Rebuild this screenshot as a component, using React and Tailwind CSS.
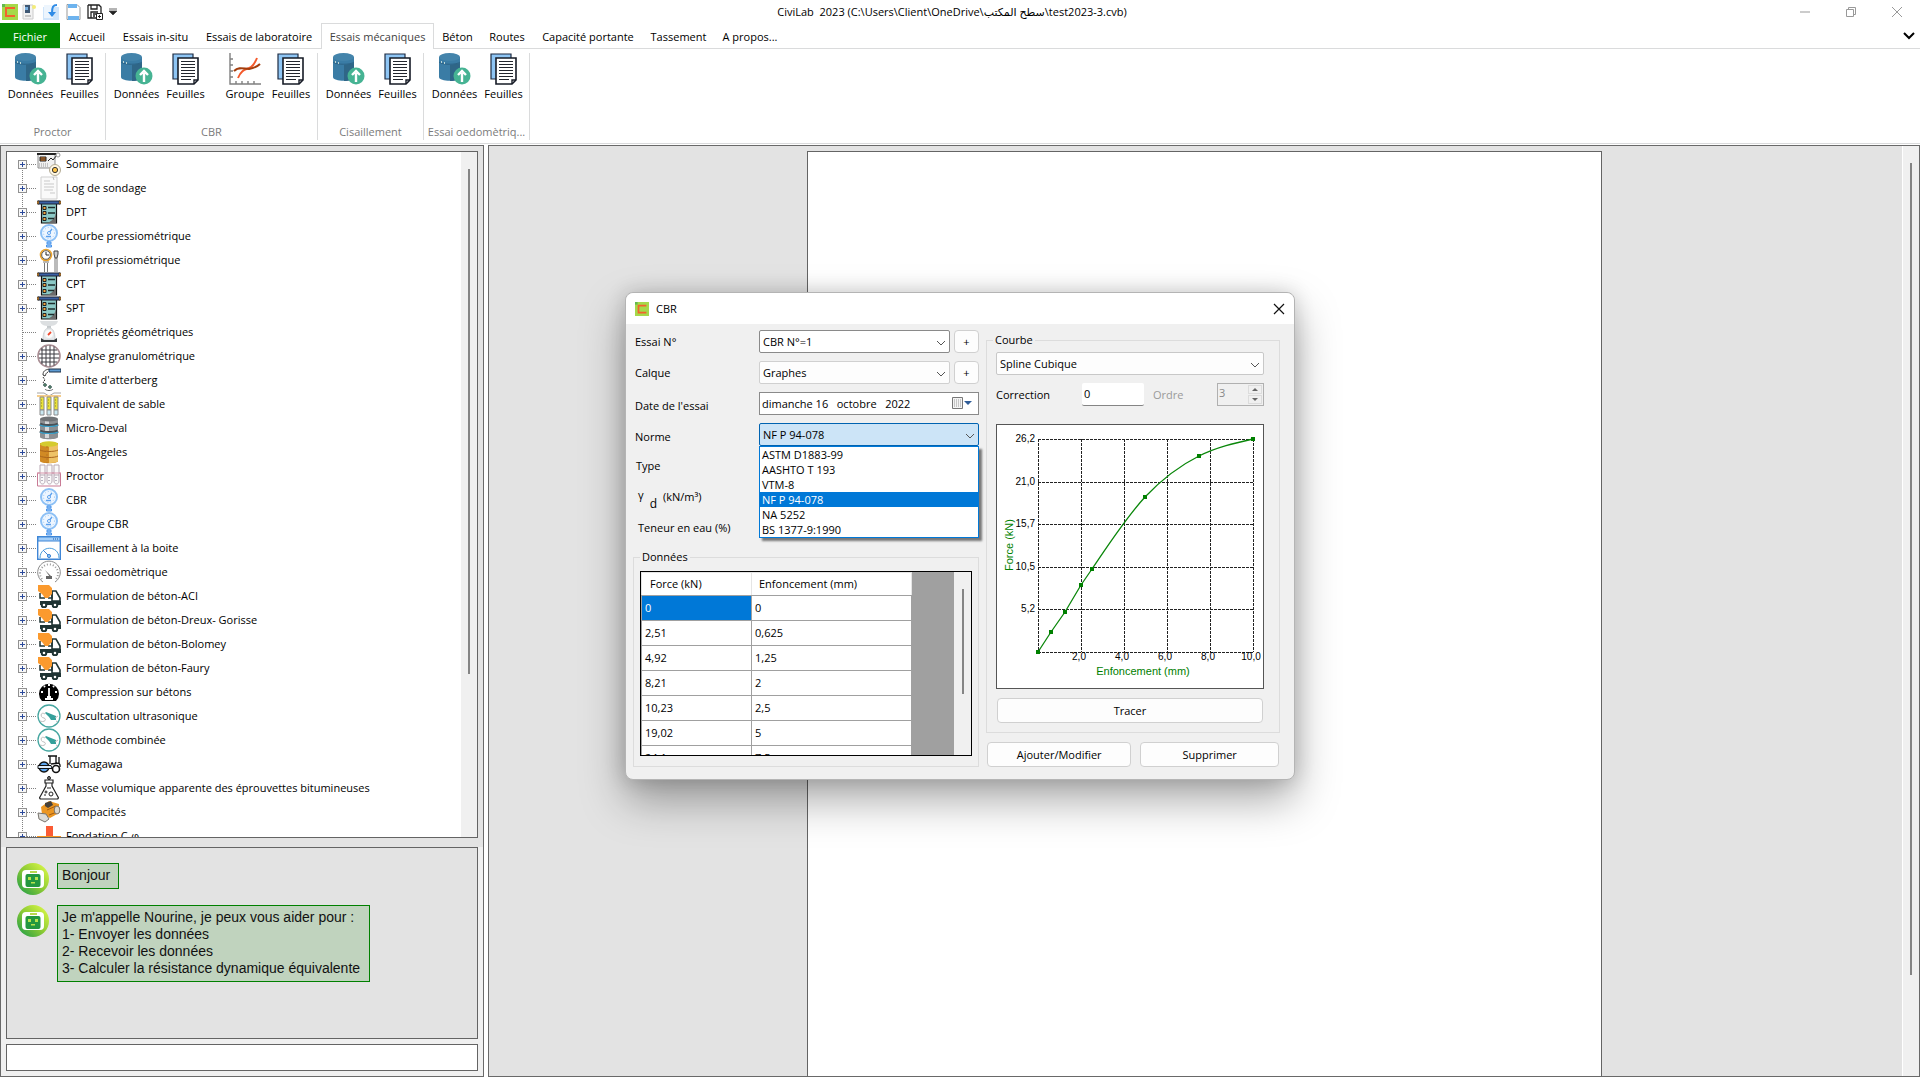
import React from "react";

const svg = (children, size = 24) => (
  <svg viewBox={`0 0 ${size} ${size}`} className="size-full" fill="none" aria-hidden="true">
    {children}
  </svg>
);

const IconSommaire = () => svg(<g transform="translate(0 1)">
  <path d="M1 1h17v14H1z" fill="#f1f1f1" stroke="#8d8d8d" />
  <path d="M0 1h20" stroke="#222" strokeWidth="2" />
  <path d="M3 4h6v4H3z" fill="#e8852b" stroke="#222" />
  <path d="M3 6h6" stroke="#222" />
  <path d="M11 8l3-3 2 2 4-5" stroke="#222" />
  <circle cx="21" cy="2" r="2" fill="#fff" stroke="#999" />
  <path d="M2 11h10M2 13h9" stroke="#999" strokeDasharray="1 1" />
  <circle cx="18" cy="17" r="5.500" fill="#fff8e4" stroke="#b3aa94" />
  <circle cx="18" cy="17" r="2.600" fill="#ffc447" stroke="#333" />
</g>);
const IconLog = () => svg(<>
  <path d="M4 1h16v22H4z" fill="#fafafa" stroke="#cfcfcf" />
  <path d="M7 5h6M7 8h10M7 11h10M7 14h9M13 17h5" stroke="#c9c9c9" />
  <path d="M16 1l1 3" stroke="#bbb" />
</>);
const IconPanel = () => svg(<>
  <path d="M4.500 3h15v20h-15z" fill="#8cc9c6" stroke="#111" strokeWidth="1.200" />
  <path d="M19 11c0 6-3 9-8 12h8z" fill="#6b6b6b" />
  <path d="M1 1h22v3H1z" fill="#3a61a5" stroke="#1c2333" />
  <path d="M0 1h2v3H0zM22 1h2v3h-2z" fill="#d98b2b" stroke="#222" strokeWidth=".6" />
  <path d="M11 7.500h7M11 13h7M11 18.500h6" stroke="#1c2c2c" strokeWidth="1.300" />
  <path d="M6 6.500h3v3H6zM6 11.500h3v3H6zM6 17.500h3v3H6z" fill="#f2a33c" stroke="#222" />
</>);
const IconGauge = () => svg(<>
  <circle cx="12" cy="9" r="8" fill="#eef6ff" stroke="#8dc0f5" strokeWidth="2" />
  <circle cx="12" cy="9" r="5.500" stroke="#9cc9f6" strokeDasharray="1 2" />
  <path d="M11 10l4-5M9 12.500h5" stroke="#5ba0ee" strokeWidth="1.300" />
  <circle cx="12" cy="9" r="1.500" fill="#fff" stroke="#5ba0ee" />
  <path d="M10 18h4v2h-4zM9.500 21h5v2h-5z" fill="#9fccfb" stroke="#4a94ea" />
</>);
const IconProfil = () => svg(<>
  <circle cx="9" cy="7" r="5.500" fill="#fff" stroke="#eaa32e" strokeWidth="1.600" />
  <circle cx="9" cy="7" r="4.300" stroke="#333" strokeWidth=".8" />
  <path d="M9 4v3h3" stroke="#222" />
  <path d="M6 14h6M7.500 15v9M10.500 15v9M18 10v14M20 10v14" stroke="#777" />
  <path d="M17 3h4v3l-1 4h-2l-1-4z" fill="#ccc" stroke="#444" />
</>);
const IconScale = () => svg(<>
  <path d="M3 1h18c-1 4-4 5-9 5S4 5 3 1z" fill="#dcdfe1" />
  <path d="M10 6h4v3h-4z" fill="#c3c8cb" />
  <path d="M6 20c0-8 2-12 6-12s6 4 6 12z" fill="#e5e8ea" stroke="#cfd3d6" />
  <circle cx="12" cy="14" r="4" fill="#fafafa" />
  <path d="M11 15l3-3" stroke="#ef4a2f" strokeWidth="1.800" />
  <path d="M4 18l3 2h10l3-2v4H4z" fill="#34383b" />
</>);
const IconSieve = () => svg(<>
  <circle cx="12" cy="12" r="11" fill="#fff" stroke="#a88d93" strokeWidth="1.600" />
  <path d="M5 4v16M9 2v20M13 1.500v21M17 2.500v19M4 6h16M2 10h20M2 14h20M4 18h16" stroke="#3d3d42" />
</>);
const IconAtterberg = () => svg(<>
  <path d="M12 1h12v3H12z" fill="#5d9bd3" stroke="#1f3047" />
  <path d="M12 1c-4 1-6 2-6 6l2 1M11 4c-2 1-2 2-3 4" stroke="#333" />
  <path d="M6 9l2 3-2 2 2 3" stroke="#333" strokeDasharray="2 1" />
  <circle cx="8" cy="17" r="1.300" fill="#8fc28f" stroke="#244" />
  <circle cx="13" cy="19" r="1.300" fill="#8fc28f" stroke="#244" />
  <path d="M8 21c1 2 7 2 8 0" stroke="#666" />
</>);
const IconSable = () => svg(<>
  <path d="M0 1h7l5 3 5-3h7" stroke="#a3a3a3" />
  <path d="M0 4h24" stroke="#f5cd8c" strokeWidth="2" />
  {[3, 10, 17].map((x) => <g key={x}>
    <path d={`M${x} 5h4v13h-4z`} fill="#eae23a" stroke="#8b8b8b" />
    <path d={`M${x} 18h4v5h-4z`} fill="#c9e8f2" stroke="#8b8b8b" />
    <path d={`M${x + 1} 8h1M${x + 1} 11h1M${x + 1} 14h1`} stroke="#8f8b17" />
  </g>)}
</>);
const IconDrum = () => svg(<>
  <path d="M3 3v18c0 3 18 3 18 0V3z" fill="#8d9093" />
  <path d="M8 4v18h4V4z" fill="#d4d6d8" />
  <ellipse cx="12" cy="3" rx="9" ry="2.500" fill="#707376" />
  <path d="M3 8c3 2 15 2 18 0M3 15c3 2 15 2 18 0" stroke="#4b5156" strokeWidth="3" />
  <path d="M3 9c3 2 15 2 18 0M3 16c3 2 15 2 18 0" stroke="#3da5cf" strokeWidth="1.200" />
</>);
const IconAngeles = () => svg(<>
  <path d="M3 3v18c0 3 18 3 18 0V3z" fill="#d18a24" />
  <path d="M12 5v18c5 0 9-1 9-2V4z" fill="#eec266" />
  <ellipse cx="12" cy="4" rx="9" ry="2.800" fill="#d5cb2e" />
  <path d="M3 10c3 2 15 2 18 0M3 16c3 2 15 2 18 0" stroke="#a9641c" />
  <path d="M10 6v17" stroke="#b97523" strokeDasharray="2 2" />
</>);
const IconProctor = () => svg(<>
  <path d="M.5 9h23v13H.5z" stroke="#c87a95" />
  {[3, 10, 17].map((x) => <path key={x} d={`M${x} 1h5v16c0 4-5 4-5 0zM${x} 11h5`} fill="#fafafa" stroke="#b8a9b5" />)}
  <path d="M0 9h24" stroke="#d996ac" />
  <path d="M5 13v5M12 13v5M19 13v5" stroke="#7a6f88" strokeDasharray="1 2" />
</>);
const IconCisaillement = () => svg(<>
  <path d="M.7.7h22.600v22.600H.7z" fill="#fff" stroke="#3f86d6" strokeWidth="1.400" />
  <path d="M1 1h22v4H1z" fill="#a3cef8" stroke="#3f86d6" />
  <path d="M16 3h1M18 3h1M20 3h1" stroke="#1b56a4" />
  <path d="M3 22c0-13 19-13 19 0" stroke="#4c9edb" />
  <path d="M6 14l6 6" stroke="#3f86d6" />
  <circle cx="12" cy="20" r="1.600" fill="#8fc5f6" stroke="#3f86d6" />
</>);
const IconOedo = () => svg(<>
  <path d="M6 22A11.300 11.300 0 1 1 18 22" stroke="#8a8a8a" />
  <path d="M5 19A9 9 0 1 1 19 19" stroke="#999" strokeWidth="2" strokeDasharray="1 2" />
  <path d="M8 10l6 6-1 1zM9 16h6v3H9z" fill="#666" />
</>);
const IconTruck = () => svg(<>
  <path d="M15 7h4l4 7v3h-8z" fill="#fff" stroke="#1f3434" strokeWidth="1.600" />
  <path d="M3 9v5h5M11 14h4V7" stroke="#1f3434" strokeWidth="1.500" />
  <path d="M1 1h11l3 3v6l-4 4H8l-3-4-4-3z" fill="#fb9a2e" />
  <path d="M3 17h21v4H3z" fill="#1f3434" />
  <circle cx="7" cy="21" r="2.300" fill="#fff" stroke="#1f3434" strokeWidth="2" />
  <circle cx="18" cy="21" r="2.300" fill="#fff" stroke="#1f3434" strokeWidth="2" />
</>);
const IconCompression = () => svg(<>
  <path d="M5 21A10 10 0 1 1 19 21z" fill="#000" />
  <path d="M12 8v10M8 19h8M10 17h4" stroke="#fff" strokeWidth="1.800" />
  <path d="M12 4v2M7 6l1 1M17 6l-1 1M4 12h2M18 12h2" stroke="#fff" strokeWidth="2" />
</>);
const IconUltra = () => svg(<>
  <circle cx="12" cy="12" r="11" fill="#fff" stroke="#45a6a0" strokeWidth="1.300" />
  <path d="M8 9l1-1 5 2 5 2v4h-5l-2-3z" fill="#35a09b" />
  <path d="M8 10c-5-3-5 4-1 4 3 1 1 5-4 3" stroke="#c0c0c0" />
  <path d="M18 14l3-2M19 17l2 1" stroke="#bbb" />
</>);
const IconRoller = () => svg(<>
  <circle cx="7" cy="15" r="5" fill="#5ca6ef" stroke="#111" strokeWidth="1.400" />
  <path d="M1 13.500h13l1 3H1z" fill="#dceeff" stroke="#111" />
  <circle cx="19" cy="17" r="3.500" fill="#fff" stroke="#111" strokeWidth="1.600" />
  <path d="M13 12V4h6v7M11 4h9M22 5v6l1 2v2M14 12l8-1" stroke="#111" strokeWidth="1.300" />
</>);
const IconFlask = () => svg(<>
  <path d="M9 7v3L3 21c-1 1 0 2 1 2h16c1 0 2-1 1-2L15 10V7M9 7h6M8 4h8v3H8zM12 0v4" stroke="#222" strokeWidth="1.200" />
  <circle cx="12" cy="2" r="1.500" stroke="#222" />
  <circle cx="14" cy="18" r="2" stroke="#222" />
  <circle cx="9" cy="16" r="1" stroke="#222" />
  <path d="M7 19h2M10 12h4" stroke="#222" />
</>);
const IconCompactor = () => svg(<>
  <path d="M4 7l8-6 10 3v9l-9 5-8-4z" fill="#eb9622" />
  <path d="M8 3l6-2 2 4-5 3-3-2z" fill="#47413a" />
  <path d="M10 10l9-4M12 15l8-3" stroke="#a35b12" />
  <path d="M1 13l8 1 3 5-4 3-6-3z" fill="#dcdcd8" stroke="#77736d" />
  <ellipse cx="20" cy="10" rx="2.800" ry="4" fill="#ddd8cf" stroke="#7c7265" />
</>);
const IconFondation = () => svg(<>
  <path d="M9 2h7v10H9z" fill="#fb5b34" />
  <path d="M0 12h24v8H0z" fill="#f7941e" />
</>);

const tree = [
  ["Sommaire", IconSommaire], ["Log de sondage", IconLog], ["DPT", IconPanel],
  ["Courbe pressiométrique", IconGauge], ["Profil pressiométrique", IconProfil],
  ["CPT", IconPanel], ["SPT", IconPanel], ["Propriétés géométriques", IconScale],
  ["Analyse granulométrique", IconSieve], ["Limite d'atterberg", IconAtterberg],
  ["Equivalent de sable", IconSable], ["Micro-Deval", IconDrum], ["Los-Angeles", IconAngeles],
  ["Proctor", IconProctor], ["CBR", IconGauge], ["Groupe CBR", IconGauge],
  ["Cisaillement à la boite", IconCisaillement], ["Essai oedomètrique", IconOedo],
  ["Formulation de béton-ACI", IconTruck], ["Formulation de béton-Dreux- Gorisse", IconTruck],
  ["Formulation de béton-Bolomey", IconTruck], ["Formulation de béton-Faury", IconTruck],
  ["Compression sur bétons", IconCompression], ["Auscultation ultrasonique", IconUltra],
  ["Méthode combinée", IconUltra], ["Kumagawa", IconRoller],
  ["Masse volumique apparente des éprouvettes bitumineuses", IconFlask],
  ["Compacités", IconCompactor], ["Fondation C-φ", IconFondation],
];

const Expander = ({ first, leaf }) => (
  <svg width="30" height="24" viewBox="0 0 30 24" className="shrink-0" shapeRendering="crispEdges" aria-hidden="true">
    <path d={first ? "M15.500 12V24" : "M15.500 0V24"} stroke="#808080" strokeDasharray="1 1" />
    <path d="M16 12.500H30" stroke="#808080" strokeDasharray="1 1" />
    {!leaf && <>
      <path d="M11.500 8.500h8v8h-8z" fill="#f8f8f8" stroke="#919191" />
      <path d="M13 12.500h5M15.500 10v5" stroke="#2b4a9b" />
    </>}
  </svg>
);

const Logo = () => svg(<>
  <path d="M0 0h16v16H0z" fill="#a5d94a" />
  <path d="M0 0h3v3H0z" fill="#63b84e" />
  <path d="M13 4H4v8h9" stroke="#f4622d" strokeWidth="2" />
</>, 16);

const DataIcon = () => svg(<>
  <path d="M0 4v20c0 5 21 5 21 0V4z" fill="#3a7ca5" />
  <path d="M11 12v16c6 0 10-2 10-4V10z" fill="#2f6687" />
  <ellipse cx="10.500" cy="4" rx="10.500" ry="4" fill="#4484ab" />
  <path d="M0 9c3 3 18 3 21 0" stroke="#2c6387" />
  <path d="M2 9h1M5 10h1" stroke="#e8f3e8" strokeWidth="1.500" />
  <circle cx="23" cy="23" r="8.500" fill="#46b393" />
  <path d="M23 29v-9M19 22l4-4 4 4" stroke="#fff" strokeWidth="2.400" />
</>, 32);
const SheetsIcon = () => svg(<>
  <path d="M3 1h20v25H3z" fill="#8ec5f4" stroke="#1d2b42" strokeWidth="1.200" />
  <path d="M8 5h20v22l-4 4H8z" fill="#fff" stroke="#161b26" strokeWidth="1.600" />
  <path d="M24 31v-4h4" stroke="#161b26" strokeWidth="1.400" />
  <path d="M11 8.500h14M11 11.500h14M11 14.500h14M11 17.500h14M11 20.500h14M11 23.500h14M11 26.500h10" stroke="#22262e" strokeWidth="1.200" />
</>, 32);
const ChartIcon = () => svg(<>
  <path d="M1 0v31h31" stroke="#808080" strokeWidth="1.400" />
  <path d="M1 6h3M1 12h3M1 18h3M1 24h3M7 31v-3M13 31v-3M19 31v-3M25 31v-3" stroke="#808080" strokeWidth="1.400" />
  <path d="M9 25c4-10 9-8 13-11 3-2 4-4 6-9" stroke="#f4592b" strokeWidth="2" />
  <path d="M5 18c5-5 10-2 15-2 5-1 8-2 11-5" stroke="#a33d0c" strokeWidth="2" />
</>, 32);

const D = ["Données", DataIcon, "w-[49px]"];
const F = ["Feuilles", SheetsIcon, "w-[49px]"];
const groups = [
  ["Proctor", "w-[106px]", [D, F]],
  ["CBR", "w-[212px]", [D, F, ["Groupe", ChartIcon, "ml-3 w-[46px]"], ["Feuilles", SheetsIcon, "w-[46px]"]]],
  ["Cisaillement", "w-[106px]", [D, F]],
  ["Essai oedomètriq...", "w-[106px]", [D, F]],
];

const Chevron = () => (
  <svg width="10" height="6" viewBox="0 0 10 6" fill="none" className="pointer-events-none absolute top-1/2 right-1 -mt-[2px]" aria-hidden="true">
    <path d="M1 1l4 4 4-4" stroke="#555" />
  </svg>
);

function Combo({ id, label, options, className, boxClass }) {
  return (
    <div className={`relative ${boxClass}`}>
      <select id={id} aria-label={label} className={`h-[23px] w-full appearance-none rounded-[2px] border pr-5 pl-[3px] outline-none ${className}`}>
        {options.map((o) => <option key={o}>{o}</option>)}
      </select>
      <Chevron />
    </div>
  );
}

const btn = "rounded-[4px] border border-[#d0d0d0] bg-[#fdfdfd] text-center";

const rows = [["0", "0"], ["2,51", "0,625"], ["4,92", "1,25"], ["8,21", "2"], ["10,23", "2,5"], ["19,02", "5"], ["24,1", "7,5"]];
const norms = ["ASTM D1883-99", "AASHTO T 193", "VTM-8", "NF P 94-078", "NA 5252", "BS 1377-9:1990"];
const points = [[41, 227], [54, 207], [68, 187], [84, 160], [95, 144], [148, 72], [202, 31], [256, 14]];

function Plot() {
  return (
    <svg viewBox="0 0 266 263" className="block w-full" role="img" aria-label="Force (kN) / Enfoncement (mm)">
      <g stroke="#222" strokeDasharray="3 1" shapeRendering="crispEdges">
        {[41, 84, 127, 170, 213, 256].map((x) => <path key={x} d={`M${x} 14V227`} />)}
        {[14, 57, 99, 142, 184, 227].map((y) => <path key={y} d={`M41 ${y}H256`} />)}
      </g>
      <path d="M41 227L54 207 68 187 84 160 95 144C110 122 128 94 148 72C166 53 184 40 202 31C220 22 238 18 256 14" fill="none" stroke="#0a870a" strokeWidth="1.300" />
      {points.map(([x, y]) => <rect key={x} x={x - 2} y={y - 2} width="4" height="4" fill="#008000" />)}
      <g fontSize="10" fill="#000" className="font-['Liberation_Sans',sans-serif]">
        {[["26,2", 17], ["21,0", 60], ["15,7", 102], ["10,5", 145], ["5,2", 187]].map(([t, y]) => <text key={t} x="38" y={y} textAnchor="end">{t}</text>)}
        {[["2,0", 82], ["4,0", 125], ["6,0", 168], ["8,0", 211], ["10,0", 254]].map(([t, x]) => <text key={t} x={x} y="235" textAnchor="middle">{t}</text>)}
      </g>
      <g fontSize="11" fill="#008000" className="font-['Liberation_Sans',sans-serif]">
        <text x="146" y="250" textAnchor="middle">Enfoncement (mm)</text>
        <text transform="translate(16 120) rotate(-90)" textAnchor="middle">Force (kN)</text>
      </g>
    </svg>
  );
}

function Dialog() {
  return (
    <div role="dialog" aria-label="CBR" className="flex w-[670px] flex-col rounded-lg border border-[#b4b4b4] bg-[#f0f0f0] shadow-[0_20px_44px_rgba(0,0,0,0.34),0_0_20px_rgba(0,0,0,0.16)]">
      <header className="flex h-[31px] items-center rounded-t-lg bg-white pr-[9px] pl-2">
        <span className="mr-1.5 h-3.5 w-4"><Logo /></span>
        <h2 className="flex-1">CBR</h2>
        <button aria-label="Fermer" className="size-3">
          {svg(<path d="M1 1l10 10M11 1L1 11" stroke="#111" strokeWidth="1.200" />, 12)}
        </button>
      </header>
      <div className="flex pt-1.5 pr-3.5 pb-3 pl-[7px]">
        <div className="mr-[7px] w-[346px]">
          <div className="grid grid-cols-[124px_1fr] gap-y-2 pl-0.5 [&>label]:h-[23px] [&>label]:leading-[23px]">
            <label htmlFor="essai">Essai N°</label>
            <div className="flex gap-1">
              <Combo id="essai" options={["CBR N°=1"]} boxClass="w-[191px]" className="border-[#8a8a8a] bg-white" />
              <button aria-label="Ajouter un essai" className={`h-[23px] w-[25px] ${btn}`}>+</button>
            </div>
            <label htmlFor="calque">Calque</label>
            <div className="flex gap-1">
              <Combo id="calque" options={["Graphes"]} boxClass="w-[191px]" className="border-[#d0d0d0] bg-[#fdfdfd]" />
              <button aria-label="Ajouter un calque" className={`h-[23px] w-[25px] ${btn}`}>+</button>
            </div>
            <label htmlFor="date" className="pt-0.5">Date de l'essai</label>
            <div className="flex h-[23px] items-center border border-[#8a8a8a] bg-white pr-1.5 pl-0.5">
              <input id="date" defaultValue="dimanche 16   octobre   2022" className="min-w-0 flex-1 outline-none" />
              <button aria-label="Calendrier" className="h-[13px] w-5">
                <svg viewBox="0 0 20 13" className="size-full" aria-hidden="true">
                  <path d="M.5.5h10v11H.5z" fill="#f4f4f4" stroke="#777" />
                  <path d="M2 3h7M2 5h7M2 7h7M2 9h7" stroke="#999" strokeDasharray="1 1" />
                  <path d="M12 4h8l-4 4z" fill="#2f5c97" />
                </svg>
              </button>
            </div>
            <label htmlFor="norme" className="pt-0.5">Norme</label>
            <div className="relative">
              <div className="relative">
                <select id="norme" defaultValue="NF P 94-078" className="h-[23px] w-full appearance-none rounded-[2px] border border-[#0063b1] bg-[#cce4f7] pr-5 pl-[3px] outline-none">
                  {norms.map((o) => <option key={o}>{o}</option>)}
                </select>
                <Chevron />
              </div>
              <ul role="listbox" aria-label="Norme" className="absolute top-full left-0 z-10 w-full border border-[#0078d7] bg-white leading-[15px] shadow-[3px_3px_2px_rgba(0,0,0,0.5)]">
                {norms.map((o) => (
                  <li key={o} role="option" aria-selected={o === "NF P 94-078"} className="pl-0.5 aria-selected:bg-[#0078d7] aria-selected:text-white">{o}</li>
                ))}
              </ul>
            </div>
            <p className="pl-px leading-[23px]">Type</p><span />
            <p className="flex h-[23px] items-center pl-[3px]">
              <span className="mr-1.5 pb-1">γ</span><sub className="mr-1.5 pt-2 text-[12px]">d</sub><span>(kN/m³)</span>
            </p><span />
            <p className="pl-[3px] leading-[23px]">Teneur en eau (%)</p><span />
          </div>
          <fieldset className="mt-2 border border-[#dcdcdc] px-1.5 pb-2.5">
            <legend className="px-0.5 leading-[20px]">Données</legend>
            <div className="mt-1 flex h-[185px] overflow-hidden border border-black bg-[#a0a0a0]">
              <table className="mr-auto w-[271px] table-fixed border-collapse self-start">
                <thead>
                  <tr className="h-[23px]">
                    <th className="w-[110px] border border-[#e5e5e5] border-b-[#a0a0a0] bg-white pl-2 text-left font-normal">Force (kN)</th>
                    <th className="border border-[#e5e5e5] border-b-[#a0a0a0] bg-white pl-[7px] text-left font-normal">Enfoncement (mm)</th>
                  </tr>
                </thead>
                <tbody>
                  {rows.map(([a, b], i) => (
                    <tr key={a} className="h-[25px]">
                      <td className={i === 0 ? "border border-[#a0a0a0] bg-[#0078d7] pl-[3px] text-white" : "border border-[#a0a0a0] bg-white pl-[3px]"}>{a}</td>
                      <td className="border border-[#a0a0a0] bg-white pl-[3px]">{b}</td>
                    </tr>
                  ))}
                </tbody>
              </table>
              <div className="w-[17px] bg-[#f0f0f0] pt-[17px]">
                <div className="mx-auto h-[105px] w-0.5 bg-[#858585]" />
              </div>
            </div>
          </fieldset>
        </div>
        <div className="flex-1">
          <fieldset className="border border-[#dcdcdc] pr-[15px] pb-[9px] pl-[9px]">
            <legend className="-ml-[3px] px-0.5 leading-[20px]">Courbe</legend>
            <Combo label="Courbe" options={["Spline Cubique"]} boxClass="mt-0.5 w-full" className="border-[#c8c8c8] bg-[#fdfdfd]" />
            <div className="mt-2 flex h-[23px] items-center">
              <label htmlFor="correction" className="w-[86px]">Correction</label>
              <input id="correction" defaultValue="0" className="h-[23px] w-[62px] rounded-[2px] border-b border-[#858585] bg-white px-0.5 pb-0.5 outline-none" />
              <label htmlFor="ordre" className="mr-auto ml-[9px] text-[#9a9a9a]">Ordre</label>
              <div className="flex h-[23px] w-[47px] border border-[#b0b0b0] p-px">
                <input id="ordre" disabled defaultValue="3" className="min-w-0 flex-1 pb-1 text-[#888]" />
                <div className="flex w-[14px] flex-col gap-px">
                  {["M1 4h6L4 1z", "M1 1h6L4 4z"].map((d, i) => (
                    <button key={d} disabled aria-label={i ? "Diminuer" : "Augmenter"} className="flex flex-1 items-center justify-center border border-[#dcdcdc]">
                      <svg width="8" height="5" viewBox="0 0 8 5" aria-hidden="true"><path d={d} fill="#666" /></svg>
                    </button>
                  ))}
                </div>
              </div>
            </div>
            <div className="mt-[18px] border border-[#555] bg-white"><Plot /></div>
            <div className="mt-[9px] flex px-px">
              <button className={`h-[25px] flex-1 ${btn}`}>Tracer</button>
            </div>
          </fieldset>
          <div className="mt-[9px] flex gap-[9px] px-px">
            <button className={`h-[25px] flex-[51] ${btn}`}>Ajouter/Modifier</button>
            <button className={`h-[25px] flex-[49] ${btn}`}>Supprimer</button>
          </div>
        </div>
      </div>
    </div>
  );
}

function Bubble({ children }) {
  return (
    <div className="flex items-start gap-2">
      <svg viewBox="0 0 32 32" className="size-8 shrink-0" aria-hidden="true">
        <defs>
          <linearGradient id="bot" x1="1" y1="0" x2="0" y2="1">
            <stop offset="0" stopColor="#e6ff4a" /><stop offset=".5" stopColor="#8ecb34" /><stop offset="1" stopColor="#13984a" />
          </linearGradient>
        </defs>
        <circle cx="16" cy="16" r="16" fill="url(#bot)" />
        <rect x="5" y="7" width="22" height="18" rx="4" fill="#fff" />
        <path d="M13 8h7v2h-7z" fill="#b8d84e" />
        <rect x="8.500" y="11" width="15" height="13" rx="2" fill="#23973f" />
        <path d="M11 14h3v3h-3zM18 14h3v3h-3zM14 19h4v1.500h-4z" fill="#b5e34b" />
      </svg>
      <p className="border border-[#008000] bg-[#c0d3be] px-1 pt-[3px] pb-1 font-['Liberation_Sans',sans-serif] text-[14px] leading-[17px] text-[#111]">{children}</p>
    </div>
  );
}

const tab = "h-[25px] leading-[27px]";

export default function App() {
  return (
    <div className="relative flex h-screen min-h-0 flex-col overflow-hidden bg-white font-['Open_Sans','Noto_Sans','DejaVu_Sans',sans-serif] text-[11px] leading-4 text-black">
      <header className="grid h-[23px] shrink-0 grid-cols-[1fr_auto_1fr] items-center">
        <div className="flex items-center pl-0.5">
          <span className="size-4"><Logo /></span>
          <button aria-label="Nouveau" className="ml-1 size-4">{svg(<>
            <path d="M1 1h10v14H1z" fill="#f2f2f2" stroke="#ccc" /><path d="M3 1h5v8H3z" fill="#3f5874" /><path d="M3 3h3v3H3z" fill="#7ab0df" /><circle cx="12" cy="3" r="2" fill="#f4ec78" /><path d="M3 12h6" stroke="#999" />
          </>, 16)}</button>
          <button aria-label="Ouvrir" className="ml-[5px] size-4">{svg(<>
            <path d="M0 3h16v13H0z" fill="#cfe5fb" /><path d="M1 1h9v13H1z" fill="#edf5fd" /><path d="M14 1c-4 0-5 2-5 8" stroke="#2f8be6" strokeWidth="2" /><path d="M5 8h8l-4 5z" fill="#2f8be6" />
          </>, 16)}</button>
          <button aria-label="Page" className="ml-[7px] size-4">{svg(<>
            <path d="M1 .5h10l3 3v12H1z" fill="#fff" stroke="#999" /><path d="M2 0h9v4H2zM2 12h11v4H2z" fill="#6db3ee" />
          </>, 16)}</button>
          <button aria-label="Enregistrer" className="ml-[5px] size-4">{svg(<>
            <path d="M1 1h11l2 2v6M9 14H1V1M4 1v4h6V1M4 14V8h7M6 10h4M6 12h2" stroke="#222" strokeWidth="1.300" /><path d="M9.500 9.500h6v6h-6zM11 12.500h3M12.500 11v3" fill="#fff" stroke="#222" />
          </>, 16)}</button>
          <button aria-label="Plus" className="ml-1.5 size-2">{svg(<path d="M0 1h8M0 3h8L4 7z" stroke="#444" fill="#222" strokeWidth=".8" />, 8)}</button>
        </div>
        <h1 className="mr-4 whitespace-pre">{"CiviLab  2023 (C:\\Users\\Client\\OneDrive\\سطح المكتب\\test2023-3.cvb)"}</h1>
        <div className="flex items-center justify-end gap-9 pr-[18px]">
          <button aria-label="Réduire" className="size-2.5">{svg(<path d="M0 5h10" stroke="#999" />, 10)}</button>
          <button aria-label="Restaurer" className="size-2.5">{svg(<path d="M.5 2.500h7v7h-7zM2.500 2.500v-2h7v7h-2" stroke="#999" />, 10)}</button>
          <button aria-label="Quitter" className="size-2.5">{svg(<path d="M0 0l10 10M10 0L0 10" stroke="#999" />, 10)}</button>
        </div>
      </header>

      <nav className="flex h-[26px] shrink-0 items-stretch border-b border-[#dadbdc]">
        <button className={`w-[60px] bg-[#008a00] text-white ${tab}`}>Fichier</button>
        <button className={`w-[54px] ${tab}`}>Accueil</button>
        <button className={`w-[83px] ${tab}`}>Essais in-situ</button>
        <button className={`w-[124px] ${tab}`}>Essais de laboratoire</button>
        <button className="relative z-10 h-[26px] w-[113px] border border-b-0 border-[#dadbdc] bg-white leading-[26px] text-[#3f3f3f]">Essais mécaniques</button>
        <button className={`w-[47px] ${tab}`}>Béton</button>
        <button className={`w-[52px] ${tab}`}>Routes</button>
        <button className={`w-[110px] ${tab}`}>Capacité portante</button>
        <button className={`w-[71px] ${tab}`}>Tassement</button>
        <button className={`w-[72px] ${tab}`}>A propos...</button>
        <button aria-label="Réduire le ruban" className="mr-[5px] ml-auto w-3">
          <svg width="12" height="8" viewBox="0 0 12 8" fill="none" aria-hidden="true"><path d="M1 1l5 5 5-5" stroke="#000" strokeWidth="2" /></svg>
        </button>
      </nav>

      <div className="flex h-[95px] shrink-0 border-b border-[#dadbdc] pt-1 pb-[3px]">
        {groups.map(([name, width, items]) => (
          <section key={name} className={`flex flex-col justify-between border-r border-[#dadbdc] ${width}`}>
            <div className="flex pl-1.5">
              {items.map(([label, Icon, w], i) => (
                <button key={i} className={`flex flex-col items-center gap-px ${w}`}>
                  <span className="size-8"><Icon /></span>
                  <span>{label}</span>
                </button>
              ))}
            </div>
            <h2 className="text-center whitespace-nowrap text-[#7b7b7b]">{name}</h2>
          </section>
        ))}
      </div>

      <main className="mt-px mb-[3px] flex min-h-0 flex-1 gap-1">
        <aside className="flex w-[484px] shrink-0 flex-col border border-[#696969] bg-[#f0f0f0]">
          <div className="flex min-h-0 flex-1 flex-col bg-[#e3e3e3] px-[5px] pt-[5px] pb-[9px]">
            <div className="flex min-h-0 flex-1 overflow-hidden border border-[#646464] bg-white">
              <ul className="min-w-0 flex-1">
                {tree.map(([label, Icon], i) => (
                  <li key={label} className="flex h-6 items-center">
                    <Expander first={i === 0} leaf={i === 7} />
                    <span className="mr-[5px] size-6 shrink-0"><Icon /></span>
                    <span className="whitespace-nowrap">{label}</span>
                  </li>
                ))}
              </ul>
              <div className="w-4 bg-[#f0f0f0] pt-[17px]">
                <div className="mx-auto h-[505px] w-0.5 bg-[#858585]" />
              </div>
            </div>
          </div>
          <div className="mx-[5px] flex h-[192px] shrink-0 flex-col gap-[10px] border border-[#646464] bg-[#e3e3e3] px-2.5 py-[15px]">
            <Bubble><span className="block pr-1">Bonjour</span></Bubble>
            <Bubble>
              <span className="block pr-[5px]">
                Je m'appelle Nourine, je peux vous aider pour :<br />1- Envoyer les données<br />2- Recevoir les données<br />3- Calculer la résistance dynamique équivalente
              </span>
            </Bubble>
          </div>
          <input aria-label="Message" className="mx-[5px] mt-[5px] mb-[5px] h-[27px] shrink-0 border border-[#646464] bg-white px-2 text-[14px] outline-none" />
        </aside>

        <section className="flex min-w-0 flex-1 border border-[#696969] bg-[#e3e3e3]">
          <div className="flex min-w-0 flex-1 justify-center pt-[5px] pl-[18px]">
            <div className="w-[795px] border border-b-0 border-[#646464] bg-white" />
          </div>
          <div className="w-[17px] border-l border-white bg-[#f0f0f0] pt-[17px]">
            <div className="mx-auto h-[812px] w-0.5 bg-[#858585]" />
          </div>
        </section>
      </main>

      <div className="pointer-events-none absolute inset-0 flex items-center justify-center pb-2">
        <div className="pointer-events-auto"><Dialog /></div>
      </div>
    </div>
  );
}
